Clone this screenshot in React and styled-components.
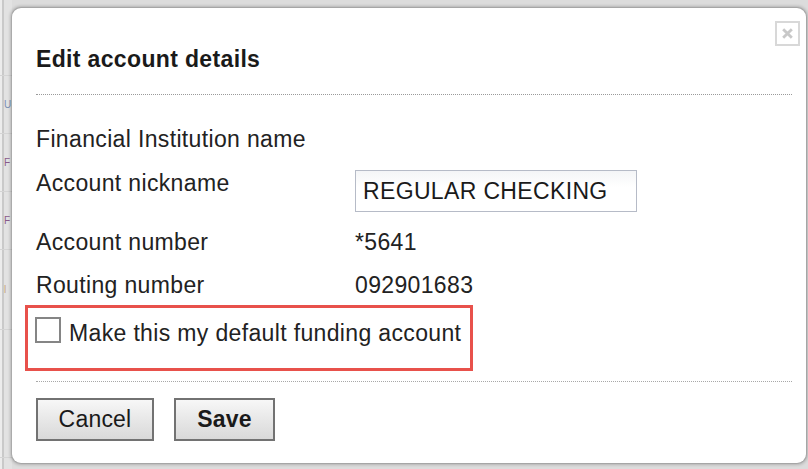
import React from 'react'
import styled, { createGlobalStyle } from 'styled-components'

const GlobalStyle = createGlobalStyle`
  html, body {
    margin: 0;
    padding: 0;
    background: #dcdcdc;
  }
  body {
    font-family: "Liberation Sans", Arial, sans-serif;
    color: #222;
  }
`

const Screen = styled.div`
  display: grid;
  grid-template-columns: 12px 1fr;
  height: 469px;
  padding: 8px 2px 0 0;
  box-sizing: border-box;
  overflow: hidden;
`

// sliver of the page that sits behind the dialog
const BehindPage = styled.div`
  margin-top: -8px;
  height: 469px;
  background: linear-gradient(to right, #ececec 0, #ececec 2px, #c9c9c9 2px, #c9c9c9 4px, #e2e2e2 4px);
  display: flex;
  flex-direction: column;
  overflow: hidden;
`

const Fragment = styled.span`
  display: block;
  height: ${p => p.h}px;
  padding-left: 4px;
  font-size: 10px;
  line-height: ${p => p.h}px;
  color: ${p => p.color || 'transparent'};
  border-bottom: 1px solid #d4d4d4;
  box-sizing: border-box;
`

const Dialog = styled.div`
  position: relative;
  background: #fff;
  border-radius: 9px;
  margin-bottom: 6px;
  padding: 0 14px 0 24px;
  box-shadow: 0 0 3px 2px rgba(0, 0, 0, 0.18), 0 0 1px 1px rgba(0, 0, 0, 0.12);
  display: flex;
  flex-direction: column;
`

const CloseButton = styled.button`
  position: absolute;
  top: 13px;
  right: 6px;
  width: 25px;
  height: 25px;
  padding: 0;
  border: 2px solid #d8d8d8;
  background: #fff;
  display: flex;
  align-items: center;
  justify-content: center;
`

const Header = styled.div`
  height: 87px;
  box-sizing: border-box;
  padding-top: 37px;
  border-bottom: 1px dotted #9a9a9a;
`

const Title = styled.h2`
  margin: 0;
  font-size: 23px;
  letter-spacing: 0.35px;
  line-height: 28px;
  font-weight: bold;
  color: #1a1a1a;
`

const Fields = styled.div`
  display: flex;
  flex-direction: column;
  padding-top: 31px;
`

const Row = styled.div`
  display: grid;
  grid-template-columns: 319px auto;
  align-items: start;
  margin-top: ${p => p.gap || 0}px;
  font-size: 23px;
  letter-spacing: 0.35px;
  line-height: 26px;
`

const Label = styled.span`
  color: #222;
`

const Value = styled.span`
  color: #222;
`

const NicknameInput = styled.input`
  width: 282px;
  height: 42px;
  box-sizing: border-box;
  padding: 0 0 0 7px;
  border: 1px solid #b6bbc7;
  background: linear-gradient(#f4f5f7, #ffffff 40%);
  font-family: "Liberation Sans", Arial, sans-serif;
  font-size: 23px;
  letter-spacing: 0.35px;
  color: #1a1a1a;
  outline: none;
`

const Highlight = styled.label`
  display: flex;
  align-items: flex-start;
  gap: 8px;
  width: 448px;
  height: 66px;
  box-sizing: border-box;
  margin: 7px 0 0 -11px;
  padding: 9px 0 0 7px;
  border: 3px solid #e8514b;
  font-size: 23px;
  letter-spacing: 0.35px;
  line-height: 26px;
  color: #222;
`

const Box = styled.span`
  flex: none;
  width: 26px;
  height: 26px;
  box-sizing: border-box;
  border: 2px solid #858585;
  background: #fff;
`

const CheckText = styled.span`
  padding-top: 3px;
`

const Footer = styled.div`
  margin-top: 10px;
  border-top: 1px dotted #a8a8a8;
  padding-top: 16px;
  display: flex;
  gap: 20px;
`

const Button = styled.button`
  width: ${p => p.w}px;
  height: 43px;
  box-sizing: border-box;
  border: 2px solid #727272;
  background: linear-gradient(#f7f7f7, #e6e6e6 55%, #d9d9d9);
  font-family: "Liberation Sans", Arial, sans-serif;
  font-size: 23px;
  letter-spacing: 0.2px;
  font-weight: ${p => (p.primary ? 'bold' : 'normal')};
  color: #1a1a1a;
  padding: 0;
`

const fragments = [
  { h: 76 },
  { h: 58, text: 'U', color: '#7c8fb5' },
  { h: 58, text: 'F', color: '#8a5a8a' },
  { h: 58, text: 'F', color: '#8a5a8a' },
  { h: 80, text: 'l', color: '#c7a57a' },
  { h: 128 },
]

export default function App() {
  return (
    <>
      <GlobalStyle />
      <Screen>
        <BehindPage>
          {fragments.map((f, i) => (
            <Fragment key={i} h={f.h} color={f.color}>{f.text}</Fragment>
          ))}
        </BehindPage>
        <Dialog>
          <CloseButton aria-label="Close">
            <svg width="13" height="13" viewBox="0 0 12 12">
              <path d="M2 2 L10 10 M10 2 L2 10" stroke="#c8c8c8" strokeWidth="2.6" />
            </svg>
          </CloseButton>
          <Header>
            <Title>Edit account details</Title>
          </Header>
          <Fields>
            <Row>
              <Label>Financial Institution name</Label>
            </Row>
            <Row gap={18}>
              <Label>Account nickname</Label>
              <NicknameInput defaultValue="REGULAR CHECKING" />
            </Row>
            <Row gap={17}>
              <Label>Account number</Label>
              <Value>*5641</Value>
            </Row>
            <Row gap={17}>
              <Label>Routing number</Label>
              <Value>092901683</Value>
            </Row>
          </Fields>
          <Highlight>
            <Box />
            <CheckText>Make this my default funding account</CheckText>
          </Highlight>
          <Footer>
            <Button w={118}>Cancel</Button>
            <Button w={101} primary>Save</Button>
          </Footer>
        </Dialog>
      </Screen>
    </>
  )
}
